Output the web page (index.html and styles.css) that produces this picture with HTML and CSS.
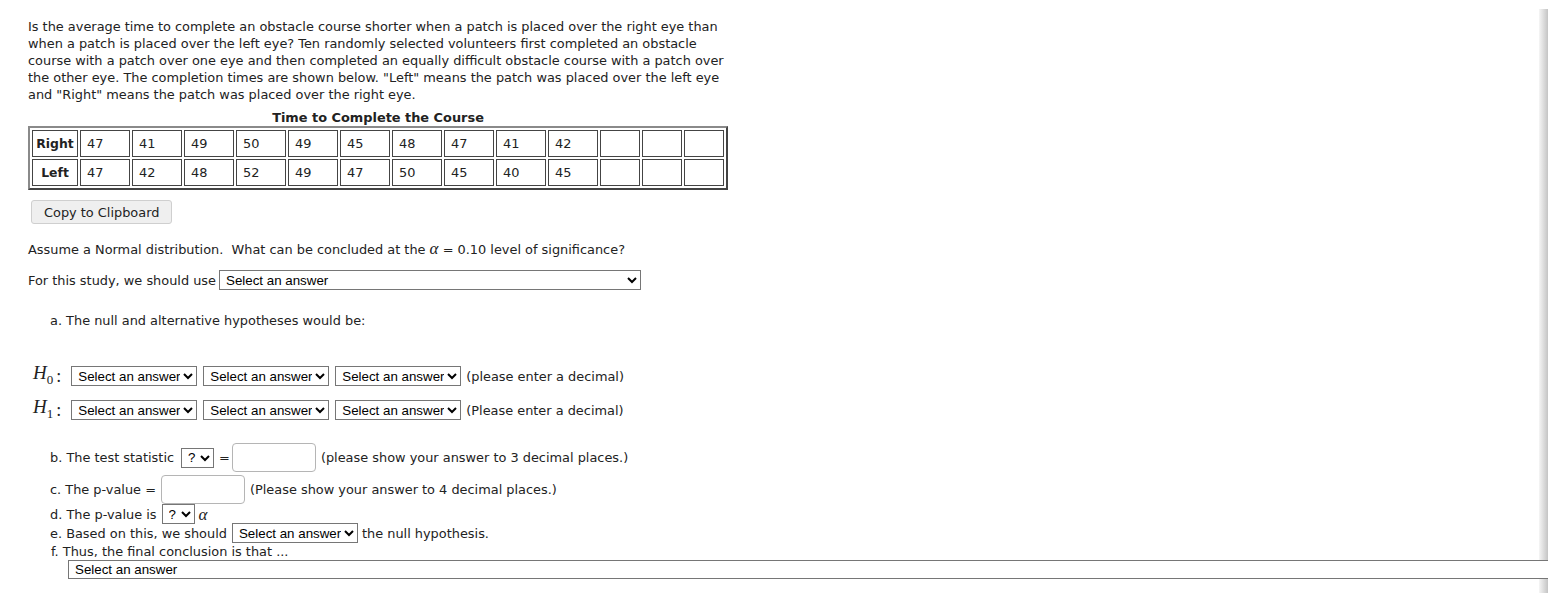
FILE: index.html
```html
<!DOCTYPE html>
<html>
<head>
<meta charset="utf-8">
<title>Obstacle course</title>
<link rel="stylesheet" href="styles.css">
</head>
<body>
<div class="page">
  <div class="question">
    <p class="intro">Is the average time to complete an obstacle course shorter when a patch is placed over the right eye than when a patch is placed over the left eye? Ten randomly selected volunteers first completed an obstacle course with a patch over one eye and then completed an equally difficult obstacle course with a patch over the other eye. The completion times are shown below. "Left" means the patch was placed over the left eye and "Right" means the patch was placed over the right eye.</p>
    <table class="data">
      <caption>Time to Complete the Course</caption>
      <tr><th>Right</th><td>47</td><td>41</td><td>49</td><td>50</td><td>49</td><td>45</td><td>48</td><td>47</td><td>41</td><td>42</td><td class="empty"></td><td class="empty"></td><td class="empty"></td></tr>
      <tr><th>Left</th><td>47</td><td>42</td><td>48</td><td>52</td><td>49</td><td>47</td><td>50</td><td>45</td><td>40</td><td>45</td><td class="empty"></td><td class="empty"></td><td class="empty"></td></tr>
    </table>
    <button class="copy" type="button">Copy to Clipboard</button>
    <p class="assume">Assume a Normal distribution.&nbsp; What can be concluded at the <span class="math alpha">α</span> = 0.10 level of significance?</p>
    <div class="row study"><span>For this study, we should use</span><select class="sel sel-study"><option>Select an answer</option></select></div>
    <div class="part part-a">a. The null and alternative hypotheses would be:</div>
    <div class="row hyp hyp0"><span class="math hyp-label">H<sub>0</sub></span><span class="colon">:</span><select class="sel sel-ans"><option>Select an answer</option></select><select class="sel sel-ans"><option>Select an answer</option></select><select class="sel sel-ans"><option>Select an answer</option></select><span class="note">(please enter a decimal)</span></div>
    <div class="row hyp hyp1"><span class="math hyp-label">H<sub>1</sub></span><span class="colon">:</span><select class="sel sel-ans"><option>Select an answer</option></select><select class="sel sel-ans"><option>Select an answer</option></select><select class="sel sel-ans"><option>Select an answer</option></select><span class="note">(Please enter a decimal)</span></div>
    <div class="row part part-b"><span>b. The test statistic</span><select class="sel sel-q"><option>?</option></select><span class="eq">=</span><input class="num" type="text"><span class="note">(please show your answer to 3 decimal places.)</span></div>
    <div class="row part part-c"><span>c. The p-value =</span><input class="num" type="text"><span class="note">(Please show your answer to 4 decimal places.)</span></div>
    <div class="row part part-d"><span>d. The p-value is</span><select class="sel sel-q"><option>?</option></select><span class="math alpha">α</span></div>
    <div class="row part part-e"><span>e. Based on this, we should</span><select class="sel sel-ans"><option>Select an answer</option></select><span>the null hypothesis.</span></div>
    <div class="part part-f">f. Thus, the final conclusion is that ...</div>
    <div class="final"><select class="sel sel-final"><option>Select an answer</option></select></div>
  </div>
</div>
</body>
</html>
```

FILE: styles.css
```css
html, body {
  margin: 0;
  padding: 0;
  background: #fff;
}
body {
  padding: 8px 7px 0 8px;
  font-family: "DejaVu Sans", sans-serif;
  font-size: 12.9px;
  line-height: 17px;
  color: #222;
}
.page {
  height: 585px;
  overflow: hidden;
  background: linear-gradient(to right, #f5f5f5, #c4c4c4) right 1px / 9px 100% no-repeat;
}
.question {
  padding: 10px 0 0 20px;
}
.intro {
  margin: 0;
  width: 704px;
}
.data {
  margin-top: 6px;
  border-collapse: separate;
  border-spacing: 2px;
  border: 2px solid;
  border-color: #8a8a8a #444 #444 #8a8a8a;
}
.data caption {
  font-weight: bold;
  line-height: 17px;
  text-align: center;
}
.data th, .data td {
  box-sizing: border-box;
  height: 27px;
  padding: 3px 6px;
  border: 1px solid #444;
  text-align: left;
  font-weight: normal;
}
.data th {
  width: 46px;
  padding: 3px 2px;
  text-align: center;
  font-weight: bold;
  font-size: 12.4px;
}
.data td {
  width: 50px;
}
.data td.empty {
  width: 40px;
}
.copy {
  display: block;
  margin: 10px 0 0 3px;
  height: 24px;
  padding: 0 12px;
  font: inherit;
  color: #222;
  background: #efefef;
  border: 1px solid #cfcfcf;
  border-radius: 3px;
}
.assume {
  margin: 16px 0 0;
}
.math {
  font-family: "Liberation Serif", serif;
  font-style: italic;
}
.alpha {
  font-size: 17px;
}
.row {
  display: flex;
  align-items: center;
  white-space: nowrap;
}
.sel {
  box-sizing: border-box;
  height: 20px;
  margin: 0 4px;
  font-family: "Liberation Sans", Arial, sans-serif;
  font-size: 13.333px;
  color: #000;
  background: #fff;
  border: 1px solid #767676;
  border-radius: 0;
  padding: 0 0 0 2px;
}
.study {
  margin-top: 12px;
  height: 20px;
}
.sel-study {
  width: 422px;
  margin-left: 3px;
}
.part {
  padding-left: 22px;
}
.part-a {
  margin-top: 22px;
}
.hyp {
  height: 20px;
  padding-left: 5px;
}
.hyp0 {
  margin-top: 37px;
}
.hyp1 {
  margin-top: 14px;
}
.hyp-label {
  font-size: 19px;
}
.hyp-label sub {
  font-style: normal;
  font-size: 13px;
}
.colon {
  font-family: "Liberation Serif", serif;
  font-size: 18px;
  margin: 0 10px 0 3px;
}
.hyp .sel-ans {
  width: 126px;
  margin: 0 6px 0 0;
}
.hyp .note {
  margin-left: -1px;
}
.sel-ans {
  width: 126px;
}
.sel-q {
  width: 33px;
  margin-left: 7px;
}
.eq {
  margin: 0 1px 0 1px;
}
.part-b {
  margin-top: 23px;
  height: 29px;
}
.part-b .num {
  margin-left: 1px;
}
.part-c {
  margin-top: 3px;
  height: 29px;
}
.part-c .num {
  margin-left: 5px;
}
.part-d {
  margin-top: 0;
  height: 20px;
}
.part-d .sel-q {
  margin-left: 5px;
}
.part-e {
  margin-top: -1px;
  height: 20px;
}
.part-e .sel-ans {
  margin-left: 5px;
}
.part-f {
  padding-left: 23px;
}
.num {
  box-sizing: border-box;
  width: 84px;
  height: 29px;
  margin: 0 5px 0 0;
  border: 1px solid #b5b5b5;
  border-radius: 4px;
}
.final {
  padding-left: 40px;
}
.sel-final {
  width: 1560px;
  height: 19px;
  margin: 0;
}
```
